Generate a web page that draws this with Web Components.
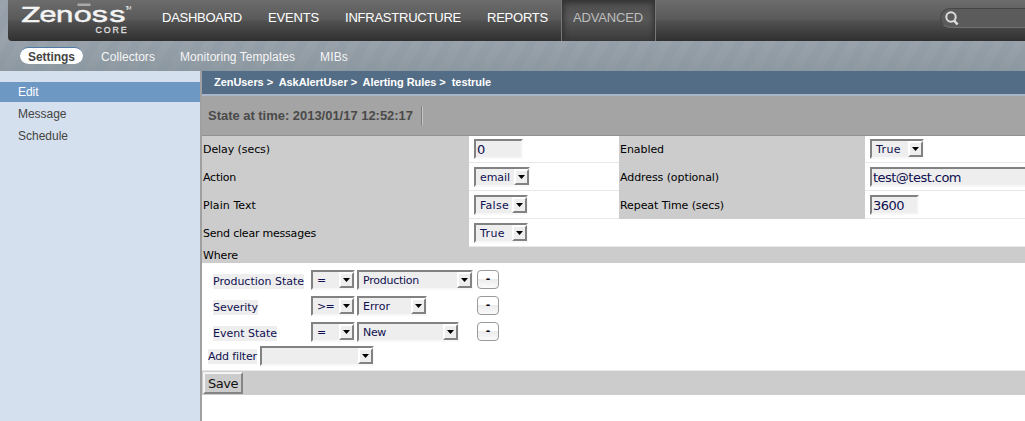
<!DOCTYPE html>
<html lang="en"><head><meta charset="utf-8"><title>Zenoss Core</title>
<style>
body{margin:0;background:#fff;overflow:hidden}
</style></head><body>
<zen-app></zen-app>
<script>
const define=(name,html,init)=>customElements.define(name,class extends HTMLElement{
  constructor(){super();this.attachShadow({mode:'open'})}
  connectedCallback(){this.shadowRoot.innerHTML=typeof html==='function'?html(this):html;if(init)init(this)}
});

/* Text run spread to a fixed advance width through letter-spacing. */
define('zen-text','<style>:host{display:inline-block;white-space:nowrap}span{display:inline-block}</style><span><slot></slot></span>',el=>{
  const span=el.shadowRoot.querySelector('span'),w=+el.getAttribute('w');
  if(w){const n=el.textContent.length;span.style.letterSpacing=((w-span.getBoundingClientRect().width)/n)+'px'}
});

define('zen-logo',`<style>:host{display:block;width:116px;height:41px}svg{display:block}</style>
<svg width="116" height="41" viewBox="20 0 116 41" fill="#f4f4f4" font-family="Lato,sans-serif">
<g font-family="Inter,sans-serif" font-size="22" stroke="#f4f4f4" stroke-width=".4"><text x="21.6" y="22" font-family="Lato,sans-serif" font-size="22" stroke-width=".7" textLength="18.6" lengthAdjust="spacingAndGlyphs">Z</text>
<text x="39.2" y="22" textLength="17.4" lengthAdjust="spacingAndGlyphs">e</text>
<text x="55.8" y="22" textLength="18" lengthAdjust="spacingAndGlyphs">n</text>
<text x="73.6" y="22" textLength="18.6" lengthAdjust="spacingAndGlyphs">o</text>
<text x="91" y="22" textLength="35" lengthAdjust="spacingAndGlyphs">ss</text></g>
<rect x="77.5" y="3.5" width="13" height="2.5" fill="#aaa"/>
<text x="125.5" y="10" font-size="5" textLength="6">TM</text>
<text x="95.5" y="32.6" font-family="Liberation Sans" font-size="8.8" textLength="31" fill="#ddd" stroke="#ddd" stroke-width=".35">CORE</text></svg>`);

define('zen-header',`<style>
:host{display:flex;height:41px;margin-left:8px;border-radius:0 0 0 4px;background:linear-gradient(#6c6c6c,#595959 48%,#505050 52%,#303030);font:13px/35px "Liberation Sans",Arial,sans-serif;color:#fff;overflow:hidden}
zen-logo{margin-left:12px}nav{display:flex;margin-left:6px}
nav zen-text{padding:0 10px 0 20px;height:41px;box-sizing:border-box}
nav zen-text+zen-text{padding-left:16px}
nav .on{color:#bdbdbd;padding:0 12px 0 11px!important;margin-left:3px;border-left:1px solid #777;border-right:1px solid #777;background:linear-gradient(#383838,#505050 7px,#585858 45%,#3b3b3b);box-shadow:inset 4px 0 5px -2px #333,inset -4px 0 5px -2px #333}
.search{margin:8px 0 0 284px;width:100px;height:18px;flex:none;border:1px solid #464646;border-bottom-color:#707070;border-radius:10px;background:#5b5b5b}
svg{display:block}
</style><zen-logo></zen-logo><nav><zen-text w="80">DASHBOARD</zen-text><zen-text w="51">EVENTS</zen-text><zen-text w="116">INFRASTRUCTURE</zen-text><zen-text w="61">REPORTS</zen-text><zen-text class="on" w="70">ADVANCED</zen-text></nav>
<div class="search"><svg width="20" height="18" fill="none" stroke="#ddd"><circle cx="10" cy="8" r="4.7" stroke-width="2"/><path d="M13 11.5l3.6 4" stroke-width="2.6"/></svg></div>`);

define('zen-subnav',`<style>:host{display:flex;height:30px;align-items:flex-start;font:12px/16px "Liberation Sans",Arial,sans-serif;color:#f5f5f5;padding:6px 0 0 20px;box-sizing:border-box}
zen-text{margin-top:2px}.on{margin-top:0;padding:2px 8px 0;height:17px;box-sizing:border-box;border-top:1px solid #4f79a8;border-radius:9px;background:#fff;color:#444;font-weight:bold;line-height:15px}
</style><zen-text class="on" w="47">Settings</zen-text><zen-text w="54" style="margin-left:18px">Collectors</zen-text><zen-text w="115" style="margin-left:25px">Monitoring Templates</zen-text><zen-text w="28" style="margin-left:25px">MIBs</zen-text>`);

define('zen-sidebar',`<style>:host{display:block;width:200px;background:#d5e0ee;border-right:2px solid #a0a0a0;padding-top:11px;box-sizing:content-box;font:12px/20px "Liberation Sans",Arial,sans-serif;color:#444}
div{height:20px;padding-left:18px;margin-bottom:2px}.on{background:#6e98c4;color:#fff}</style>
<div class="on"><zen-text w="20.5">Edit</zen-text></div><div><zen-text w="48.5">Message</zen-text></div><div><zen-text w="50">Schedule</zen-text></div>`);

define('zen-select',el=>`<style>:host{display:flex;width:${el.getAttribute('width')}px;height:20px;flex:none;box-sizing:border-box;border:2px solid;border-color:#828282 #f8f8f8 #f8f8f8 #828282;background:#eee;font:11px/17px "DejaVu Sans",Verdana,sans-serif;color:#101050}
.v{flex:1;padding-left:4px;min-width:0;white-space:nowrap}
.b{width:15px;height:16px;margin-right:-1px;box-sizing:border-box;border:2px solid;border-color:#fff #828282 #828282 #fff;background:#eee}
svg{display:block}</style><span class="v"><slot></slot></span><span class="b"><svg width="11" height="12"><path d="M2 4h7L5.5 8z" fill="#000"/></svg></span>`);

define('zen-input',el=>`<style>:host{display:block;width:${el.getAttribute('width')}px;height:20px;flex:none;box-sizing:border-box;border:2px solid;border-color:#828282 #f8f8f8 #f8f8f8 #828282;background:#eee;font:13px/17px "DejaVu Sans",Verdana,sans-serif;color:#101050;padding-left:1px;white-space:nowrap}</style><slot></slot>`);

define('zen-minus',`<style>:host{display:block;width:22px;height:19px;box-sizing:border-box;border:1px solid #999;border-radius:4px;background:linear-gradient(#fff 45%,#ececec 50%,#fafafa);font:bold 11px/16px "DejaVu Sans",sans-serif;text-align:center;color:#000}</style>-`);

define('zen-rule',`<style>:host{display:block;font:11px/29px "DejaVu Sans",Verdana,sans-serif;color:#000;background:#ccc}
.g{display:grid;grid-template-columns:267px 150px 246px 160px;grid-template-rows:27px 28px 28px 28px}
.l{padding-left:1px}.v{background:#fff;border-bottom:1px solid #e8e8e8;padding:4px 0 0 5px;overflow:hidden}.wide{grid-column:2/5}
.first{line-height:27px}.v.first{padding-top:3px}
.where{height:16px;line-height:17px;padding-left:1px}</style>
<div class="g">
<div class="l first"><zen-text w="67">Delay (secs)</zen-text></div><div class="v first"><zen-input width="49"><zen-text w="8">0</zen-text></zen-input></div><div class="l first"><zen-text w="44">Enabled</zen-text></div><div class="v first"><zen-select width="54"><zen-text w="25">True</zen-text></zen-select></div>
<div class="l"><zen-text w="33">Action</zen-text></div><div class="v"><zen-select width="56"><zen-text w="30">email</zen-text></zen-select></div><div class="l"><zen-text w="99">Address (optional)</zen-text></div><div class="v"><zen-input width="190"><zen-text w="88">test@test.com</zen-text></zen-input></div>
<div class="l"><zen-text w="53">Plain Text</zen-text></div><div class="v"><zen-select width="54"><zen-text w="29">False</zen-text></zen-select></div><div class="l"><zen-text w="104">Repeat Time (secs)</zen-text></div><div class="v"><zen-input width="49"><zen-text w="31">3600</zen-text></zen-input></div>
<div class="l"><zen-text w="113">Send clear messages</zen-text></div><div class="v wide"><zen-select width="54"><zen-text w="25">True</zen-text></zen-select></div>
</div><div class="where"><zen-text w="35">Where</zen-text></div>`);

define('zen-filters',`<style>:host{display:block;height:108px;box-sizing:border-box;background:#fff;border-bottom:1px solid #e8e8e8;padding:6px 0 0 6px;font:11px/15px "DejaVu Sans",Verdana,sans-serif;color:#101050}
.r{display:grid;grid-template-columns:98px 46px 120px 22px;height:26px;padding-left:5px;align-items:start}
.n{background:#eee;justify-self:start;margin-top:5px;height:15px}.r zen-select{margin-top:1px}.r zen-minus{margin-top:1px}.a{display:flex;gap:3px;margin-top:-1px}.a .n{margin-top:3px}</style>
<div class="r"><zen-text class="n" w="91">Production State</zen-text><zen-select width="44"><zen-text w="8">=</zen-text></zen-select><zen-select width="116"><zen-text w="56">Production</zen-text></zen-select><zen-minus></zen-minus></div>
<div class="r"><zen-text class="n" w="45">Severity</zen-text><zen-select width="44"><zen-text w="17">&gt;=</zen-text></zen-select><zen-select width="70"><zen-text w="27">Error</zen-text></zen-select><zen-minus></zen-minus></div>
<div class="r"><zen-text class="n" w="64">Event State</zen-text><zen-select width="44"><zen-text w="8">=</zen-text></zen-select><zen-select width="102"><zen-text w="23">New</zen-text></zen-select><zen-minus></zen-minus></div>
<div class="a"><zen-text class="n" w="49">Add filter</zen-text><zen-select width="114"></zen-select></div>`);

define('zen-main',`<style>:host{display:block;flex:1;min-width:0;overflow:hidden;background:#fff;font-family:"Liberation Sans",Arial,sans-serif;font-weight:bold}
.crumb{height:23px;box-sizing:content-box;background:#546d86;border-bottom:2px solid #a9b6c9;color:#fff;font-size:11px;line-height:23px;padding-left:12px}
.state{display:flex;align-items:center;height:39px;background:#a4a4a4;border-bottom:1px solid #929090;color:#4a4a4a;font-size:13px;padding-left:6px}
.state i{height:19px;margin-left:8px;border-left:1px solid #808080;border-right:1px solid #c4c4c4}
.foot{height:24px;background:#ccc;font-weight:normal;padding-left:1px}
.save{width:40px;height:22px;box-sizing:border-box;border:2px solid;border-color:#f4f4f4 #858585 #858585 #f4f4f4;font:13px/19px "DejaVu Sans",Verdana,sans-serif;color:#111;padding-left:3px}
.pad{padding-top:1px}</style>
<div class="crumb"><zen-text w="277">ZenUsers &gt;&nbsp; AskAlertUser &gt;&nbsp; Alerting Rules &gt;&nbsp; testrule</zen-text></div>
<div class="state"><zen-text w="205">State at time: 2013/01/17 12:52:17</zen-text><i></i></div>
<zen-rule style="font-weight:normal"></zen-rule><zen-filters style="font-weight:normal"></zen-filters>
<div class="foot"><div class="pad"><div class="save"><zen-text w="30">Save</zen-text></div></div></div>`);

define('zen-app',`<style>:host{display:flex;flex-direction:column;width:1025px;height:421px;overflow:hidden}
.top{height:71px;background:linear-gradient(#8c969f00 0,#8c969f00 41px,#87949caa 71px),repeating-linear-gradient(120deg,#9aa3ac 0 9px,#959fa9 9px 18px)}
.body{display:flex;flex:1;min-height:0}</style>
<div class="top"><zen-header></zen-header><zen-subnav></zen-subnav></div><div class="body"><zen-sidebar></zen-sidebar><zen-main></zen-main></div>`);
</script></body></html>
